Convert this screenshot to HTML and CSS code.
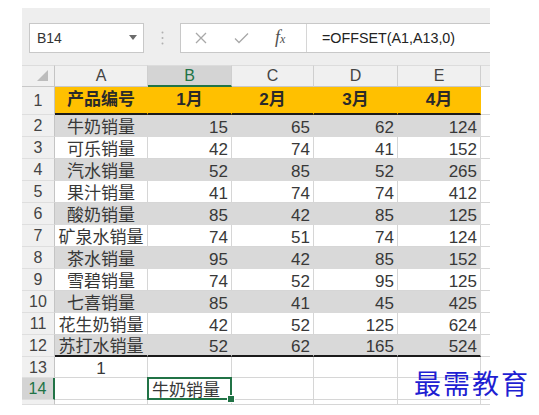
FILE: index.html
```html
<!DOCTYPE html>
<html lang="zh">
<head>
<meta charset="utf-8">
<title>OFFSET</title>
<link rel="stylesheet" href="styles.css">
</head>
<body>
<div class="sheet">
  <div class="toolbar">
    <div class="namebox">
      <span>B14</span>
      <svg class="caret" width="8" height="5" viewBox="0 0 8 5"><path d="M0 0H8L4 5Z" fill="#6b6b6b"/></svg>
    </div>
    <div class="grip">
      <svg width="3" height="14" viewBox="0 0 3 14"><circle cx="1.5" cy="1.5" r="1" fill="#b0b0b0"/><circle cx="1.5" cy="7" r="1" fill="#b0b0b0"/><circle cx="1.5" cy="12.5" r="1" fill="#b0b0b0"/></svg>
    </div>
    <div class="formula">
      <svg class="ic-x" width="12" height="12" viewBox="0 0 12 12"><path d="M1 1L11 11M11 1L1 11" stroke="#a8a8a8" stroke-width="1.3" fill="none"/></svg>
      <svg class="ic-ok" width="15" height="12" viewBox="0 0 15 12"><path d="M1 6.5L5 10.5L14 1.5" stroke="#a8a8a8" stroke-width="1.3" fill="none"/></svg>
      <span class="fx"><i>f</i><i class="x">x</i></span>
      <span class="sep"></span>
      <span class="ftext">=OFFSET(A1,A13,0)</span>
    </div>
  </div>
  <div class="grid">
    <div class="h corner"><svg width="12" height="12" viewBox="0 0 12 12"><path d="M0 11L11 0V11Z" fill="#bcbcbc"/></svg></div>
    <div class="h">A</div><div class="h selc">B</div><div class="h">C</div><div class="h">D</div><div class="h">E</div><div class="h hf"></div>

    <div class="r">1</div><div class="c y">产品编号</div><div class="c y">1月</div><div class="c y">2月</div><div class="c y">3月</div><div class="c y">4月</div><div class="c f"></div>

    <div class="r">2</div><div class="c g ctr">牛奶销量</div><div class="c g n">15</div><div class="c g n">65</div><div class="c g n">62</div><div class="c g n">124</div><div class="c f"></div>
    <div class="r">3</div><div class="c ctr">可乐销量</div><div class="c n">42</div><div class="c n">74</div><div class="c n">41</div><div class="c n">152</div><div class="c f"></div>
    <div class="r">4</div><div class="c g ctr">汽水销量</div><div class="c g n">52</div><div class="c g n">85</div><div class="c g n">52</div><div class="c g n">265</div><div class="c f"></div>
    <div class="r">5</div><div class="c ctr">果汁销量</div><div class="c n">41</div><div class="c n">74</div><div class="c n">74</div><div class="c n">412</div><div class="c f"></div>
    <div class="r">6</div><div class="c g ctr">酸奶销量</div><div class="c g n">85</div><div class="c g n">42</div><div class="c g n">85</div><div class="c g n">125</div><div class="c f"></div>
    <div class="r">7</div><div class="c ctr">矿泉水销量</div><div class="c n">74</div><div class="c n">51</div><div class="c n">74</div><div class="c n">124</div><div class="c f"></div>
    <div class="r">8</div><div class="c g ctr">茶水销量</div><div class="c g n">95</div><div class="c g n">42</div><div class="c g n">85</div><div class="c g n">152</div><div class="c f"></div>
    <div class="r">9</div><div class="c ctr">雪碧销量</div><div class="c n">74</div><div class="c n">52</div><div class="c n">95</div><div class="c n">125</div><div class="c f"></div>
    <div class="r">10</div><div class="c g ctr">七喜销量</div><div class="c g n">85</div><div class="c g n">41</div><div class="c g n">45</div><div class="c g n">425</div><div class="c f"></div>
    <div class="r">11</div><div class="c ctr">花生奶销量</div><div class="c n">42</div><div class="c n">52</div><div class="c n">125</div><div class="c n">624</div><div class="c f"></div>
    <div class="r">12</div><div class="c g b2 ctr">苏打水销量</div><div class="c g b2 n">52</div><div class="c g b2 n">62</div><div class="c g b2 n">165</div><div class="c g b2 n">524</div><div class="c f"></div>

    <div class="r">13</div><div class="c ctr">1</div><div class="c"></div><div class="c"></div><div class="c"></div><div class="c"></div><div class="c f"></div>
    <div class="r selr">14</div><div class="c"></div><div class="c active">牛奶销量</div><div class="c"></div><div class="c"></div><div class="c"></div><div class="c f"></div>
    <div class="r"></div><div class="c"></div><div class="c"></div><div class="c"></div><div class="c"></div><div class="c"></div><div class="c f"></div>
  </div>
</div>
<div class="watermark">最需教育</div>
</body>
</html>
```

FILE: styles.css
```css
* { box-sizing: border-box; }

body {
  margin: 0;
  background: #ffffff;
  font-family: "Liberation Sans", "Noto Sans CJK SC", sans-serif;
  color: #383838;
}

.sheet {
  margin: 8px 0 0 22px;
  width: 468px;
}

.toolbar {
  height: 57px;
  background: #eeeeee;
  display: flex;
  align-items: flex-start;
  padding-top: 15px;
}

.namebox {
  margin-left: 7px;
  width: 115px;
  height: 30px;
  background: #ffffff;
  border: 1px solid #c8c8c8;
  display: flex;
  align-items: center;
  justify-content: space-between;
  padding: 0 6px 0 7px;
  font-size: 14px;
  color: #333333;
}

.caret { margin-top: -2px; }

.grip {
  width: 36px;
  height: 30px;
  display: flex;
  align-items: center;
  justify-content: center;
}

.formula {
  flex: 1;
  height: 30px;
  background: #ffffff;
  border: 1px solid #c8c8c8;
  border-right: none;
  display: flex;
  align-items: center;
}

.ic-x { margin-left: 14px; }
.ic-ok { margin-left: 27px; }

.fx {
  margin-left: 26px;
  width: 17px;
  font-family: "Liberation Serif", serif;
  color: #505050;
  font-size: 18px;
  line-height: 18px;
}
.fx .x { font-size: 12px; }

.sep {
  margin-left: 14px;
  width: 1px;
  align-self: stretch;
  background: #d6d6d6;
}

.ftext {
  margin-left: 15px;
  font-size: 14.3px;
  color: #222222;
}

.grid {
  display: grid;
  grid-template-columns: 33px 93px 84px 82px 84px 83px 9px;
  grid-template-rows: 22px 28px repeat(11, 22px) 21px 22px 5px;
}

.h {
  background: #f0f0f0;
  border-right: 1px solid #cfcfcf;
  border-bottom: 1px solid #c8c8c8;
  border-top: 1px solid #dcdcdc;
  display: flex;
  align-items: center;
  justify-content: center;
  font-size: 16px;
  color: #444444;
}
.hf { border-right: none; }

.corner {
  justify-content: flex-end;
  align-items: flex-end;
  padding: 0 5px 4px 0;
  border-right-color: #c4c4c4;
}

.selc {
  background: #d4d4d4;
  color: #217346;
  border-bottom: 2px solid #217346;
}

.r {
  background: #f0f0f0;
  border-right: 1px solid #c4c4c4;
  border-bottom: 1px solid #dedede;
  display: flex;
  align-items: center;
  justify-content: center;
  font-size: 16px;
  color: #444444;
  padding-top: 1px;
}

.selr {
  background: #d4d4d4;
  color: #217346;
  border-right: 2px solid #217346;
}

.c {
  border-right: 1px solid #d6d6d6;
  border-bottom: 1px solid #d6d6d6;
  display: flex;
  align-items: flex-end;
  font-size: 17px;
  line-height: 16px;
  padding: 0 3px;
  white-space: nowrap;
}

.f { border-right: none; }

.y {
  background: #ffc000;
  border-right-color: #ffc000;
  border-bottom: 2px solid #1a1a1a;
  font-weight: bold;
  justify-content: center;
  align-items: center;
  color: #2a2a2a;
}

.g {
  background: #d9d9d9;
  border-right-color: #d9d9d9;
  border-bottom-color: #d9d9d9;
}

.b2 { border-bottom: 2px solid #1a1a1a; }

.ctr { justify-content: center; }
.n { justify-content: flex-end; }

.active {
  position: relative;
  padding-left: 4px;
}
.active::after {
  content: "";
  position: absolute;
  top: -1px;
  left: -1px;
  right: -1px;
  bottom: -1px;
  border: 2px solid #217346;
}
.active::before {
  content: "";
  position: absolute;
  right: -4px;
  bottom: -4px;
  width: 6px;
  height: 6px;
  background: #217346;
  border: 1px solid #ffffff;
  z-index: 1;
}

.watermark {
  position: absolute;
  left: 414px;
  top: 369px;
  font-family: "Noto Sans CJK SC", sans-serif;
  font-size: 27px;
  line-height: 28px;
  letter-spacing: 2px;
  color: #1f1fd2;
}
```
